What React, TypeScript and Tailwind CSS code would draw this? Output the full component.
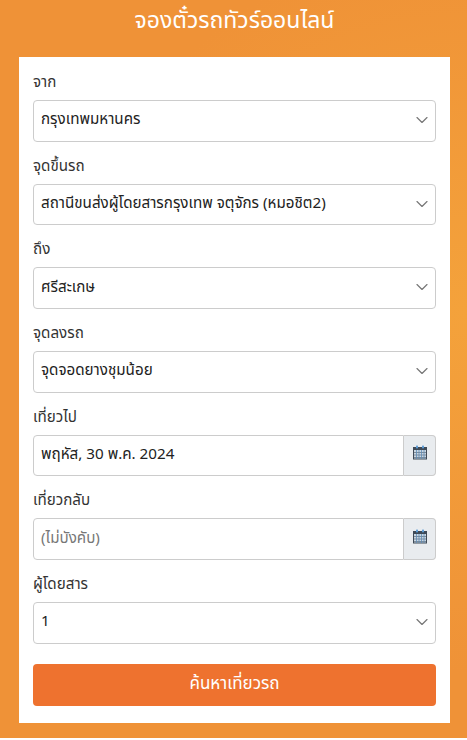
import { CSSProperties } from "react";
import { ChevronDown } from "lucide-react";

const font = { fontFamily: '"Noto Sans Thai", "Noto Sans", "Liberation Sans", sans-serif' } as CSSProperties;

function CalendarIcon() {
  return (
    <svg width="14" height="15" viewBox="0 0 14 15" className="mb-[5px] block">
      <rect x="0.5" y="2.5" width="13" height="11.5" fill="#c9d6e2" stroke="#3f4a57" />
      <rect x="0" y="2" width="14" height="3" fill="#3f4a57" />
      <rect x="3" y="0.5" width="2" height="3" rx="0.8" fill="#5b9bd5" />
      <rect x="9" y="0.5" width="2" height="3" rx="0.8" fill="#5b9bd5" />
      <path d="M1 7.5h12M1 10h12M1 12.5h12" stroke="#6a7785" strokeWidth="0.8" />
      <path d="M3.5 5v9M6 5v9M8.5 5v9M11 5v9" stroke="#5f8db8" strokeWidth="0.8" />
    </svg>
  );
}

function SelectField({ label, value }: { label: string; value: string }) {
  return (
    <div className="mb-[13px]">
      <label className="mb-[5px] block text-[15.2px] leading-[24px] text-[#333]">{label}</label>
      <div className="relative">
        <select
          defaultValue={value}
          style={font}
          className="block h-[41.67px] w-full appearance-none rounded-[4px] border border-[#ccc] bg-white pl-[7px] pr-8 text-[15.2px] text-[#222]"
        >
          <option value={value}>{value}</option>
        </select>
        <ChevronDown className="pointer-events-none absolute right-[4.5px] top-[10px] h-[20px] w-[20px] text-[#777]" strokeWidth={1.4} />
      </div>
    </div>
  );
}

function DateField({ label, value, placeholder }: { label: string; value?: string; placeholder?: string }) {
  return (
    <div className="mb-[13px]">
      <label className="mb-[5px] block text-[15.2px] leading-[24px] text-[#333]">{label}</label>
      <div className="flex h-[41.67px]">
        <input
          readOnly
          defaultValue={value}
          placeholder={placeholder}
          style={font}
          className="min-w-0 flex-1 rounded-l-[4px] border border-[#ccc] bg-white pl-[7px] text-[15.2px] text-[#222] placeholder:text-[#777]"
        />
        <div className="flex w-[32px] items-center justify-center rounded-r-[4px] border border-l-0 border-[#ccc] bg-[#e9ecef]">
          <CalendarIcon />
        </div>
      </div>
    </div>
  );
}

export default function App() {
  return (
    <div style={font} className="h-[738px] bg-[radial-gradient(ellipse_at_100%_42%,#f4a23b,#ef9237_60%)] pl-[19px] pr-[17px]">
      <h1 className="flex h-[57px] items-center justify-center pb-[15px] text-[23px] font-normal leading-none text-white">
        จองตั๋วรถทัวร์ออนไลน์
      </h1>
      <div className="h-[666px] bg-white pl-[14px] pr-[14px] pt-[14px]">
        <SelectField label="จาก" value="กรุงเทพมหานคร" />
        <SelectField label="จุดขึ้นรถ" value="สถานีขนส่งผู้โดยสารกรุงเทพ จตุจักร (หมอชิต2)" />
        <SelectField label="ถึง" value="ศรีสะเกษ" />
        <SelectField label="จุดลงรถ" value="จุดจอดยางชุมน้อย" />
        <DateField label="เที่ยวไป" value="พฤหัส, 30 พ.ค. 2024" />
        <DateField label="เที่ยวกลับ" placeholder="(ไม่บังคับ)" />
        <SelectField label="ผู้โดยสาร" value="1" />
        <button type="button" className="mt-[7px] h-[42px] w-full rounded-[4px] bg-[#ee722f] text-[17px] text-white">
          ค้นหาเที่ยวรถ
        </button>
      </div>
    </div>
  );
}
